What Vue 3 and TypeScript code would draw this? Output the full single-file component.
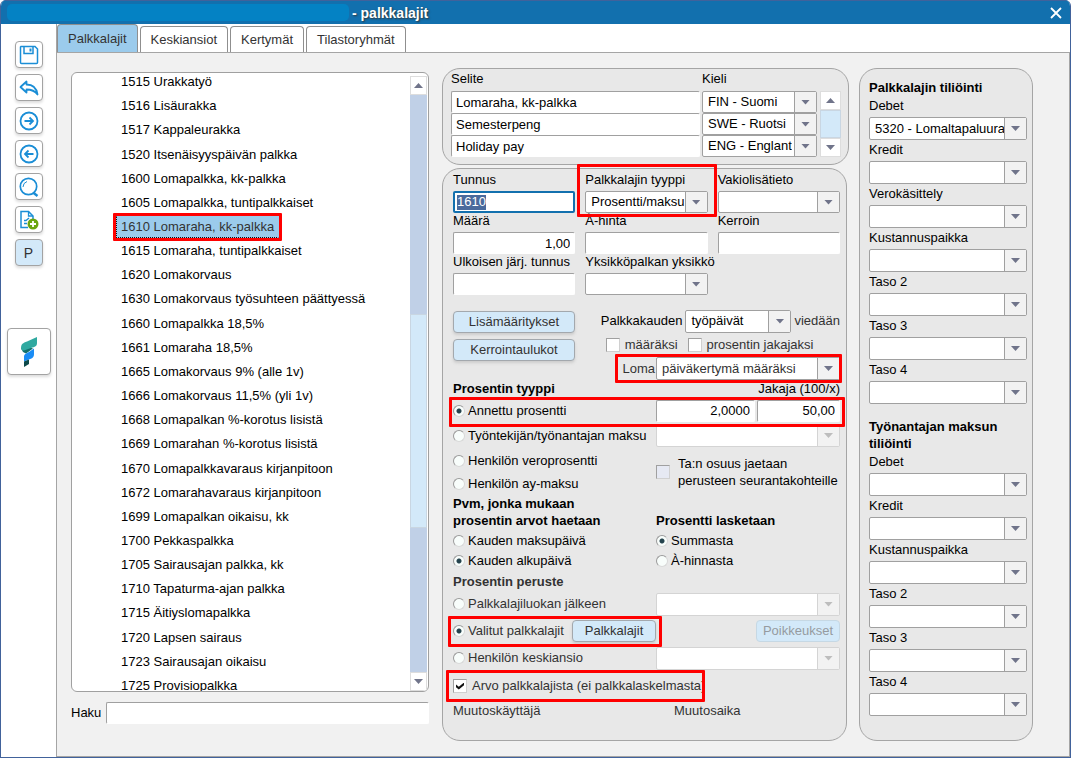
<script setup lang="ts">
import { ref } from 'vue'

interface WageType {
  code: string
  name: string
}

interface Description {
  text: string
  language: string
}

const tabs: string[] = ['Palkkalajit', 'Keskiansiot', 'Kertymät', 'Tilastoryhmät']
const activeTab = ref<string>('Palkkalajit')

const wageTypes: WageType[] = [
  { code: '1515', name: 'Urakkatyö' },
  { code: '1516', name: 'Lisäurakka' },
  { code: '1517', name: 'Kappaleurakka' },
  { code: '1520', name: 'Itsenäisyyspäivän palkka' },
  { code: '1600', name: 'Lomapalkka, kk-palkka' },
  { code: '1605', name: 'Lomapalkka, tuntipalkkaiset' },
  { code: '1610', name: 'Lomaraha, kk-palkka' },
  { code: '1615', name: 'Lomaraha, tuntipalkkaiset' },
  { code: '1620', name: 'Lomakorvaus' },
  { code: '1630', name: 'Lomakorvaus työsuhteen päättyessä' },
  { code: '1660', name: 'Lomapalkka 18,5%' },
  { code: '1661', name: 'Lomaraha 18,5%' },
  { code: '1665', name: 'Lomakorvaus 9% (alle 1v)' },
  { code: '1666', name: 'Lomakorvaus 11,5% (yli 1v)' },
  { code: '1668', name: 'Lomapalkan %-korotus lisistä' },
  { code: '1669', name: 'Lomarahan %-korotus lisistä' },
  { code: '1670', name: 'Lomapalkkavaraus kirjanpitoon' },
  { code: '1672', name: 'Lomarahavaraus kirjanpitoon' },
  { code: '1699', name: 'Lomapalkan oikaisu, kk' },
  { code: '1700', name: 'Pekkaspalkka' },
  { code: '1705', name: 'Sairausajan palkka, kk' },
  { code: '1710', name: 'Tapaturma-ajan palkka' },
  { code: '1715', name: 'Äitiyslomapalkka' },
  { code: '1720', name: 'Lapsen sairaus' },
  { code: '1723', name: 'Sairausajan oikaisu' },
  { code: '1725', name: 'Provisiopalkka' },
]
const selectedCode = ref<string>('1610')

const descriptions = ref<Description[]>([
  { text: 'Lomaraha, kk-palkka', language: 'FIN - Suomi' },
  { text: 'Semesterpeng', language: 'SWE - Ruotsi' },
  { text: 'Holiday pay', language: 'ENG - Englanti' },
])

const code = ref('1610')
const amount = ref('1,00')
const percent = ref('2,0000')
const divisor = ref('50,00')
const percentType = ref('annettu')
const dateBasis = ref('alku')
const calcBasis = ref('summa')
const percentBasis = ref('valitut')
const valueFromType = ref(true)

const wageAccounts: string[] = ['Debet', 'Kredit', 'Verokäsittely', 'Kustannuspaikka', 'Taso 2', 'Taso 3', 'Taso 4']
const employerAccounts: string[] = ['Debet', 'Kredit', 'Kustannuspaikka', 'Taso 2', 'Taso 3', 'Taso 4']
</script>

<template>
  <div class="window">
    <header class="titlebar">
      <span class="company"></span>
      <h1 class="title">- palkkalajit</h1>
      <button class="close" type="button" aria-label="Sulje">
        <svg viewBox="0 0 12 12" width="12" height="12"><path d="M1 1 11 11M11 1 1 11" fill="none" stroke="#fff" stroke-width="1.800" /></svg>
      </button>
    </header>

    <div class="body">
      <nav class="sidebar">
        <button class="tool" type="button" aria-label="Tallenna">
          <svg viewBox="0 0 20 20" width="20" height="20" fill="none" stroke="#1b8ed6" stroke-width="1.5">
            <path d="M2 1.500H16L18.500 4V17.500Q18.500 18.500 17.500 18.500H2.500Q1.500 18.500 1.500 17.500V2Z" /><path d="M5 1.500V8.500H14V1.500" /><path d="M11.500 3.500V6.500" stroke-width="2" />
          </svg>
        </button>
        <button class="tool" type="button" aria-label="Kumoa">
          <svg viewBox="0 0 20 20" width="20" height="20" fill="none" stroke="#1b8ed6" stroke-width="1.800" stroke-linejoin="round">
            <path d="M1.500 9 7.500 3.500V6.500C14 6.500 17.500 10 18.500 16.500C16 13 13 11.500 7.500 11.500V14.500Z" />
          </svg>
        </button>
        <button class="tool" type="button" aria-label="Seuraava">
          <svg viewBox="0 0 20 20" width="20" height="20" fill="none" stroke="#1b8ed6" stroke-width="1.800">
            <circle cx="10" cy="10" r="8.500" /><path d="M5.500 10H14M10.500 6.500 14 10 10.500 13.500" />
          </svg>
        </button>
        <button class="tool" type="button" aria-label="Edellinen">
          <svg viewBox="0 0 20 20" width="20" height="20" fill="none" stroke="#1b8ed6" stroke-width="1.800">
            <circle cx="10" cy="10" r="8.500" /><path d="M14.500 10H6M9.500 6.500 6 10 9.500 13.500" />
          </svg>
        </button>
        <button class="tool" type="button" aria-label="Hae">
          <svg viewBox="0 0 20 20" width="20" height="20" fill="none" stroke="#1b8ed6">
            <circle cx="9.500" cy="9.500" r="8.200" stroke-width="1.700" /><path d="M4 10A6 6 0 0 1 8 4.500" stroke-width="1" /><path d="M14 15.500 18.500 19" stroke-width="2.400" />
          </svg>
        </button>
        <button class="tool" type="button" aria-label="Uusi">
          <svg viewBox="0 0 20 20" width="20" height="20" fill="none" stroke="#1b8ed6" stroke-width="1.500">
            <path d="M9 17.500H2V1.500H9.500L14 6V9" /><path d="M9.500 1.500V6H14M5 13.500H8M5 10.500H7L10 8" stroke-width="1.300" />
            <circle cx="14" cy="14" r="5.500" fill="#6aa50f" stroke="none" /><path d="M11 14H17M14 11V17" stroke="#fff" stroke-width="1.800" />
          </svg>
        </button>
        <button class="tool letter" type="button">P</button>
        <button class="brand" type="button" aria-label="Etusivu">
          <svg viewBox="0 0 18 32" width="18" height="32">
            <path d="M1 12 3 16 6 17.500 13 12.500 9 11Z" fill="#14706c" />
            <path d="M17 1V7C17 10 15 11 11 12L4 14.500Q1 15 1 12C1 8 3 7 7 5.500Z" fill="#2fa9a0" />
            <path d="M14 12.500V18C14 21.500 12 22.500 9 23.500L4 25.500V21C4 18 6 17.500 9 16Z" fill="#1a8cf5" />
            <path d="M4 25.500 9 23.500V28L4 31Z" fill="#0d4a4a" />
          </svg>
        </button>
      </nav>

      <div class="page">
        <div class="tabs" role="tablist">
          <button
            v-for="tab in tabs"
            :key="tab"
            class="tab"
            :class="{ active: tab === activeTab }"
            type="button"
            role="tab"
            :aria-selected="tab === activeTab"
            @click="activeTab = tab"
          >{{ tab }}</button>
        </div>

        <main class="content">
          <section class="browser">
            <div class="listbox">
              <ul class="types">
                <li v-for="t in wageTypes" :key="t.code">
                  <button class="type" :class="{ selected: t.code === selectedCode, marked: t.code === '1610' }" type="button" @click="selectedCode = t.code">{{ t.code }} {{ t.name }}</button>
                </li>
              </ul>
              <div class="scrollbar" aria-hidden="true">
                <span class="step up"></span>
                <span class="track before"></span>
                <span class="thumb"></span>
                <span class="track after"></span>
                <span class="step down"></span>
              </div>
            </div>
            <div class="search">
              <label for="haku">Haku</label>
              <input id="haku" class="text" type="text" />
            </div>
          </section>

          <section class="details">
            <div class="panel names">
              <div class="names-head"><span>Selite</span><span>Kieli</span></div>
              <div class="names-body">
                <div class="names-rows">
                  <div v-for="d in descriptions" :key="d.language" class="names-row">
                    <input v-model="d.text" class="text" type="text" aria-label="Selite" />
                    <span class="combo">
                      <select v-model="d.language" aria-label="Kieli"><option>{{ d.language }}</option></select>
                      <i class="arrow"></i>
                    </span>
                  </div>
                </div>
                <div class="mini-scroll" aria-hidden="true">
                  <span class="step up"></span><span class="thumb"></span><span class="step down"></span>
                </div>
              </div>
            </div>

            <form class="panel form" @submit.prevent>
              <div class="fields">
                <div class="field">
                  <label for="tunnus">Tunnus</label>
                  <span class="focused"><input id="tunnus" v-model="code" class="code" type="text" size="4" /></span>
                </div>
                <div class="field marked type-mark">
                  <label for="tyyppi">Palkkalajin tyyppi</label>
                  <span class="combo"><select id="tyyppi"><option>Prosentti/maksu</option></select><i class="arrow"></i></span>
                </div>
                <div class="field">
                  <label for="vakio">Vakiolisätieto</label>
                  <span class="combo"><select id="vakio"><option></option></select><i class="arrow"></i></span>
                </div>
                <div class="field">
                  <label for="maara">Määrä</label>
                  <input id="maara" v-model="amount" class="text number" type="text" />
                </div>
                <div class="field">
                  <label for="ahinta">À-hinta</label>
                  <input id="ahinta" class="text" type="text" />
                </div>
                <div class="field">
                  <label for="kerroin">Kerroin</label>
                  <input id="kerroin" class="text" type="text" />
                </div>
                <div class="field">
                  <label for="ulkoinen">Ulkoisen järj. tunnus</label>
                  <input id="ulkoinen" class="text" type="text" />
                </div>
                <div class="field">
                  <label for="yksikko">Yksikköpalkan yksikkö</label>
                  <span class="combo"><select id="yksikko"><option></option></select><i class="arrow"></i></span>
                </div>
              </div>

              <div class="period">
                <div class="actions">
                  <button class="btn" type="button">Lisämääritykset</button>
                  <button class="btn" type="button">Kerrointaulukot</button>
                </div>
                <div class="period-fields">
                  <div class="line">
                    <label for="kausi">Palkkakauden</label>
                    <span class="combo days"><select id="kausi"><option>työpäivät</option></select><i class="arrow"></i></span>
                    <span class="dim">viedään</span>
                  </div>
                  <div class="line checks dim">
                    <label class="check"><input type="checkbox" />määräksi</label>
                    <label class="check"><input type="checkbox" />prosentin jakajaksi</label>
                  </div>
                  <div class="line holiday marked dim">
                    <label for="loma">Loma</label>
                    <span class="combo accrual"><select id="loma"><option>päiväkertymä määräksi</option></select><i class="arrow"></i></span>
                  </div>
                </div>
              </div>

              <div class="rules">
                <h2>Prosentin tyyppi</h2>
                <label class="divisor-label" for="jakaja">Jakaja (100/x)</label>

                <div class="wide marked given">
                  <label class="radio"><input v-model="percentType" type="radio" name="ptype" value="annettu" />Annettu prosentti</label>
                  <div class="pair">
                    <input v-model="percent" class="text number" type="text" aria-label="Prosentti" />
                    <input id="jakaja" v-model="divisor" class="text number" type="text" />
                  </div>
                </div>

                <label class="radio"><input v-model="percentType" type="radio" name="ptype" value="maksu" />Työntekijän/työnantajan maksu</label>
                <span class="combo off"><select disabled aria-label="Maksu"><option></option></select><i class="arrow"></i></span>

                <label class="radio"><input v-model="percentType" type="radio" name="ptype" value="vero" />Henkilön veroprosentti</label>
                <label class="share"><input type="checkbox" disabled /><span>Ta:n osuus jaetaan<br />perusteen seurantakohteille</span></label>
                <label class="radio"><input v-model="percentType" type="radio" name="ptype" value="ay" />Henkilön ay-maksu</label>

                <h2 class="two-line">Pvm, jonka mukaan<br />prosentin arvot haetaan</h2>
                <h2 class="two-line bottom">Prosentti lasketaan</h2>

                <label class="radio"><input v-model="dateBasis" type="radio" name="pvm" value="maksu" />Kauden maksupäivä</label>
                <label class="radio"><input v-model="calcBasis" type="radio" name="calc" value="summa" />Summasta</label>
                <label class="radio"><input v-model="dateBasis" type="radio" name="pvm" value="alku" />Kauden alkupäivä</label>
                <label class="radio"><input v-model="calcBasis" type="radio" name="calc" value="ahinta" />À-hinnasta</label>

                <h2 class="full dim">Prosentin peruste</h2>

                <label class="radio dim"><input v-model="percentBasis" type="radio" name="basis" value="luokka" />Palkkalajiluokan jälkeen</label>
                <span class="combo off"><select disabled aria-label="Palkkalajiluokka"><option></option></select><i class="arrow"></i></span>

                <div class="chosen marked dim">
                  <label class="radio"><input v-model="percentBasis" type="radio" name="basis" value="valitut" />Valitut palkkalajit</label>
                  <button class="btn small" type="button">Palkkalajit</button>
                </div>
                <button class="btn small exceptions" type="button" disabled>Poikkeukset</button>

                <label class="radio dim"><input v-model="percentBasis" type="radio" name="basis" value="keski" />Henkilön keskiansio</label>
                <span class="combo off"><select disabled aria-label="Keskiansio"><option></option></select><i class="arrow"></i></span>

                <div class="full dim source">
                  <label class="check marked"><input v-model="valueFromType" type="checkbox" />Arvo palkkalajista (ei palkkalaskelmasta)</label>
                </div>

                <span class="dim">Muutoskäyttäjä</span>
                <span class="dim changed-at">Muutosaika</span>
              </div>
            </form>
          </section>

          <aside class="panel accounts">
            <h2>Palkkalajin tiliöinti</h2>
            <div class="account-list">
              <div v-for="(name, i) in wageAccounts" :key="name" class="field">
                <label :for="'wage' + i">{{ name }}</label>
                <span class="combo"><select :id="'wage' + i"><option>{{ i === 0 ? '5320 - Lomaltapaluura' : '' }}</option></select><i class="arrow"></i></span>
              </div>
            </div>
            <h2 class="second">Työnantajan maksun tiliöinti</h2>
            <div class="account-list">
              <div v-for="(name, i) in employerAccounts" :key="name" class="field">
                <label :for="'employer' + i">{{ name }}</label>
                <span class="combo"><select :id="'employer' + i"><option></option></select><i class="arrow"></i></span>
              </div>
            </div>
          </aside>
        </main>
      </div>
    </div>
  </div>
</template>

<style>
body {
  background: #fff;
}
</style>

<style scoped>
.window,
.window * {
  box-sizing: border-box;
}

.window {
  display: flex;
  flex-direction: column;
  min-height: 100vh;
  border: 1px solid #41629b;
  border-top: 0;
  border-radius: 6px 6px 0 0;
  overflow: hidden;
  background: #fff;
  color: #000;
  font-family: "Liberation Sans", Arial, sans-serif;
  font-size: 13px;
  line-height: 16px;
}

.window button,
.window input,
.window select {
  margin: 0;
  color: inherit;
  font: inherit;
}

h1,
h2 {
  margin: 0;
  font-size: 13px;
  font-weight: bold;
}

.dim {
  color: #333;
}

/* Title bar */
.titlebar {
  display: flex;
  align-items: center;
  gap: 3px;
  height: 24px;
  padding: 0 8px 0 6px;
  border-top: 1px solid #41629b;
  background: #1270ae;
}

.company {
  flex: 0 1 342px;
  height: 17px;
  border-radius: 5px;
  background: #0482c4;
}

.title {
  color: #fff;
  font-size: 14px;
  line-height: 20px;
  text-shadow: 1px 1px 2px #333;
}

.close {
  display: flex;
  margin-left: auto !important;
  padding: 0;
  border: 0;
  background: none;
}

/* Frame */
.body {
  display: flex;
  flex: 1;
}

.sidebar {
  display: flex;
  flex: none;
  flex-direction: column;
  align-items: center;
  gap: 6px;
  width: 56px;
  padding-top: 17px;
  border-right: 1px solid #a5a5a5;
}

.tool,
.brand {
  display: flex;
  align-items: center;
  justify-content: center;
  flex: none;
  padding: 0;
  border: 1px solid #a3a3a3;
  border-radius: 4px;
  background: #fff;
  box-shadow: 0 2px 3px #ddd;
}

.tool {
  width: 28px;
  height: 27px;
}

.letter {
  background: #d3e9f9;
}

.window .letter {
  font-size: 14px;
  color: #333;
}

.window .brand {
  width: 44px;
  height: 47px;
  margin-top: 56px;
}

.page {
  display: flex;
  flex: 1;
  flex-direction: column;
  min-width: 0;
}

.tabs {
  display: flex;
  align-items: flex-end;
  gap: 2px;
  height: 29px;
  border-bottom: 1px solid #a5a5a5;
}

.window .tab {
  height: 26px;
  padding: 0 10px;
  border: 1px solid #8f8f8f;
  border-bottom: 0;
  border-radius: 4px 4px 0 0;
  background: #fff;
  color: #333;
}

.window .tab.active {
  height: 28px;
  background: #9bcbec;
}

.content {
  display: grid;
  flex: 1;
  grid-template-columns: minmax(0, 361fr) minmax(0, 407fr) minmax(0, 174fr);
  gap: 10px;
  padding: 15px 36px 15px 14px;
  border-right: 1px solid #a5a5a5;
  border-bottom: 1px solid #a5a5a5;
  background: #f1f1f1;
}

.panel {
  border: 1px solid #a5a5a5;
  border-radius: 18px;
  background: #e8e8e8;
}

/* Wage type list */
.browser {
  display: flex;
  flex-direction: column;
  gap: 10px;
  padding: 4px 3px 17px 0;
}

.listbox {
  display: flex;
  flex: 1;
  border: 1px solid #a0a0a0;
  border-radius: 6px;
  overflow: hidden;
  background: #fff;
}

.types {
  display: grid;
  flex: 1;
  grid-auto-rows: 1fr;
  margin: -3px 0 -7px;
  padding: 0 0 0 44px;
  list-style: none;
}

.types li {
  display: flex;
  align-items: center;
}

.type {
  padding: 2px 4px;
  border: 1px dotted transparent;
  background: none;
  text-align: left;
  white-space: nowrap;
}

.window .type.selected {
  border-color: #9bcbec #9bcbec #111 #111;
  background: #9bcbec;
  color: #333;
}

.scrollbar {
  display: flex;
  flex-direction: column;
  width: 17px;
  margin: 3px 1px 0 0;
}

.step {
  display: flex;
  align-items: center;
  justify-content: center;
  height: 19px;
  border: 1px solid #ddd;
  background: #fff;
}

.step::after {
  width: 9px;
  height: 5px;
  background: #70748a;
  clip-path: polygon(50% 0, 100% 100%, 0 100%);
  content: "";
}

.step.down::after {
  clip-path: polygon(0 0, 100% 0, 50% 100%);
}

.track {
  background: #c0d0e7;
}

.track.before {
  flex: 220;
}

.scrollbar .thumb {
  flex: 212;
}

.track.after {
  flex: 145;
}

.thumb {
  border: 1px solid #c9d6e2;
  background: #d3e9f9;
}

.search {
  display: flex;
  align-items: center;
  gap: 5px;
}

/* Controls */
.text {
  width: 100%;
  min-width: 0;
  height: 22px;
  padding: 0 4px;
  border: 1px solid #fff;
  border-top-color: #a0a0a0;
  border-left-color: #a0a0a0;
  border-radius: 2px;
  background: #fff;
}

.number {
  text-align: right;
}

.combo {
  display: grid;
  min-width: 0;
  height: 23px;
}

.combo select {
  grid-area: 1 / 1;
  width: 100%;
  min-width: 0;
  height: 100%;
  padding: 0 22px 0 5px;
  border: 1px solid #a0a0a0;
  border-radius: 2px;
  appearance: none;
  background: #fff;
  opacity: 1;
}

.names-row .combo select {
  padding-right: 24px;
}

.arrow {
  display: flex;
  grid-area: 1 / 1;
  align-items: center;
  justify-content: center;
  justify-self: end;
  width: 22px;
  margin: 1px 1px 1px 0;
  border-left: 1px solid #a0a0a0;
  background: #f2f2f2;
  pointer-events: none;
}

.arrow::after {
  width: 9px;
  height: 5px;
  background: #70748a;
  clip-path: polygon(0 0, 100% 0, 50% 100%);
  content: "";
}

.combo.off select,
.combo.off .arrow {
  border-color: #d4d4d4;
}

.combo.off .arrow::after {
  background: #bdbdbd;
}

.radio,
.check {
  display: flex;
  align-items: center;
  white-space: nowrap;
}

.radio {
  gap: 3px;
}

.check {
  gap: 5px;
}

input[type="radio"] {
  flex: none;
  width: 12px;
  height: 12px;
  border: 1px solid #9a9a9a;
  border-right-color: #d8d8d8;
  border-bottom-color: #d8d8d8;
  border-radius: 50%;
  appearance: none;
  background: #f8fdfb;
}

input[type="radio"]:checked {
  background: radial-gradient(circle, #24434d 0 2px, #f8fdfb 3px);
}

input[type="checkbox"] {
  display: flex;
  flex: none;
  align-items: center;
  justify-content: center;
  width: 14px;
  height: 14px;
  border: 1px solid #a0a0a0;
  border-right-color: #d0d0d0;
  border-bottom-color: #d0d0d0;
  appearance: none;
  background: #fff;
}

input[type="checkbox"]:disabled {
  background: #e6e9f3;
}

input[type="checkbox"]:checked::after {
  width: 8px;
  height: 7px;
  background: #111;
  clip-path: polygon(0 30%, 35% 62%, 100% 0, 100% 38%, 35% 100%, 0 68%);
  content: "";
}

.btn {
  height: 22px;
  padding: 0;
  border: 1px solid #a3a8ad;
  border-radius: 4px;
  background: #d3e9f9;
  box-shadow: 0 2px 3px #ccc;
}

.window .btn {
  color: #333;
}

.btn.small {
  width: 84px;
}

.window .btn:disabled {
  border-color: #c6d8e4;
  box-shadow: none;
  color: #969ba0;
}

/* Red emphasis frames drawn over the surrounding content */
.marked {
  position: relative;
}

.marked::after {
  position: absolute;
  z-index: 1;
  inset: -4px;
  border: 3px solid #f00;
  border-radius: 1px;
  pointer-events: none;
  content: "";
}

.type-mark::after {
  inset: -8px -9px -4px -8px;
}

.holiday::after {
  inset: -3px -2px -3px auto;
  width: 221px;
}

.given::after {
  inset: -3px -5px -5px -4px;
}

.chosen::after {
  inset: 1px -6px 0 -5px;
}

.source .marked::after {
  inset: -8px 0 -8px -7px;
}

/* Descriptions */
.details {
  display: flex;
  flex-direction: column;
  gap: 3px;
}

.names {
  padding: 2px 7px 7px 8px;
}

.names-head,
.names-row {
  display: grid;
  grid-template-columns: minmax(0, 249fr) minmax(0, 115fr);
  gap: 2px;
}

.names-head {
  margin: 0 24px 4px 0;
}

.names-body {
  display: flex;
  gap: 3px;
}

.names-rows {
  flex: 1;
}

.names-row .combo {
  height: 22px;
}

.mini-scroll {
  display: flex;
  flex-direction: column;
  width: 21px;
}

.mini-scroll .thumb {
  flex: 1;
}

/* Form */
.form {
  flex: 1;
  margin-right: 2px;
  padding: 3px 6px 16px 10px;
}

.fields {
  display: grid;
  grid-template-columns: repeat(3, minmax(0, 1fr));
  grid-auto-rows: 41px;
  column-gap: 10px;
}

.field {
  display: flex;
  flex-direction: column;
  gap: 3px;
  white-space: nowrap;
}

.focused {
  display: flex;
  align-items: center;
  height: 22px;
  padding: 0 2px;
  border: 2px solid #1270ae;
  border-radius: 2px;
  background: #fff;
}

.window .code {
  width: 29px;
  height: 15px;
  padding: 0;
  border: 0;
  outline: 0;
  background: #4a6a9c;
  color: #fff;
}

.period {
  display: flex;
  justify-content: space-between;
  margin-top: 14px;
}

.actions {
  display: flex;
  flex-direction: column;
  gap: 6px;
  width: 122px;
  padding-top: 2px;
}

.line {
  display: flex;
  align-items: center;
  justify-content: flex-end;
  gap: 3px;
  height: 24px;
}

.holiday {
  gap: 1px;
  height: 23px;
}

.checks {
  justify-content: flex-start;
  gap: 10px;
  padding-left: 5px;
}

.days {
  width: 106px;
}

.accrual {
  width: 184px;
}

.rules {
  display: grid;
  grid-template-columns: minmax(0, 203fr) minmax(0, 184fr);
  grid-template-rows: 18px repeat(3, 25px) 22px 36px 20px 20px 22px 22px 32px 22px 34px 16px;
  align-items: center;
}

.divisor-label {
  text-align: right;
}

.wide {
  display: grid;
  grid-column: 1 / -1;
  grid-template-columns: minmax(0, 203fr) minmax(0, 184fr);
  align-items: center;
}

.pair {
  display: grid;
  grid-template-columns: minmax(0, 99fr) minmax(0, 83fr);
  gap: 2px;
}

.full {
  grid-column: 1 / -1;
}

.share {
  display: flex;
  grid-row: span 2;
  align-items: center;
  gap: 8px;
  line-height: 17px;
  white-space: nowrap;
}

.two-line {
  align-self: start;
  line-height: 17px;
}

.two-line.bottom {
  padding-top: 17px;
}

.chosen {
  display: flex;
  align-items: center;
  align-self: stretch;
  justify-content: space-between;
}

.exceptions {
  justify-self: end;
}

.source {
  display: flex;
}

.changed-at {
  padding-left: 18px;
}

/* Accounting */
.accounts {
  padding: 10px 5px 16px 9px;
}

.accounts h2 {
  margin-bottom: 2px;
  line-height: 17px;
}

.accounts .second {
  margin-top: 14px;
}

.account-list {
  display: grid;
  gap: 2px;
}
</style>
